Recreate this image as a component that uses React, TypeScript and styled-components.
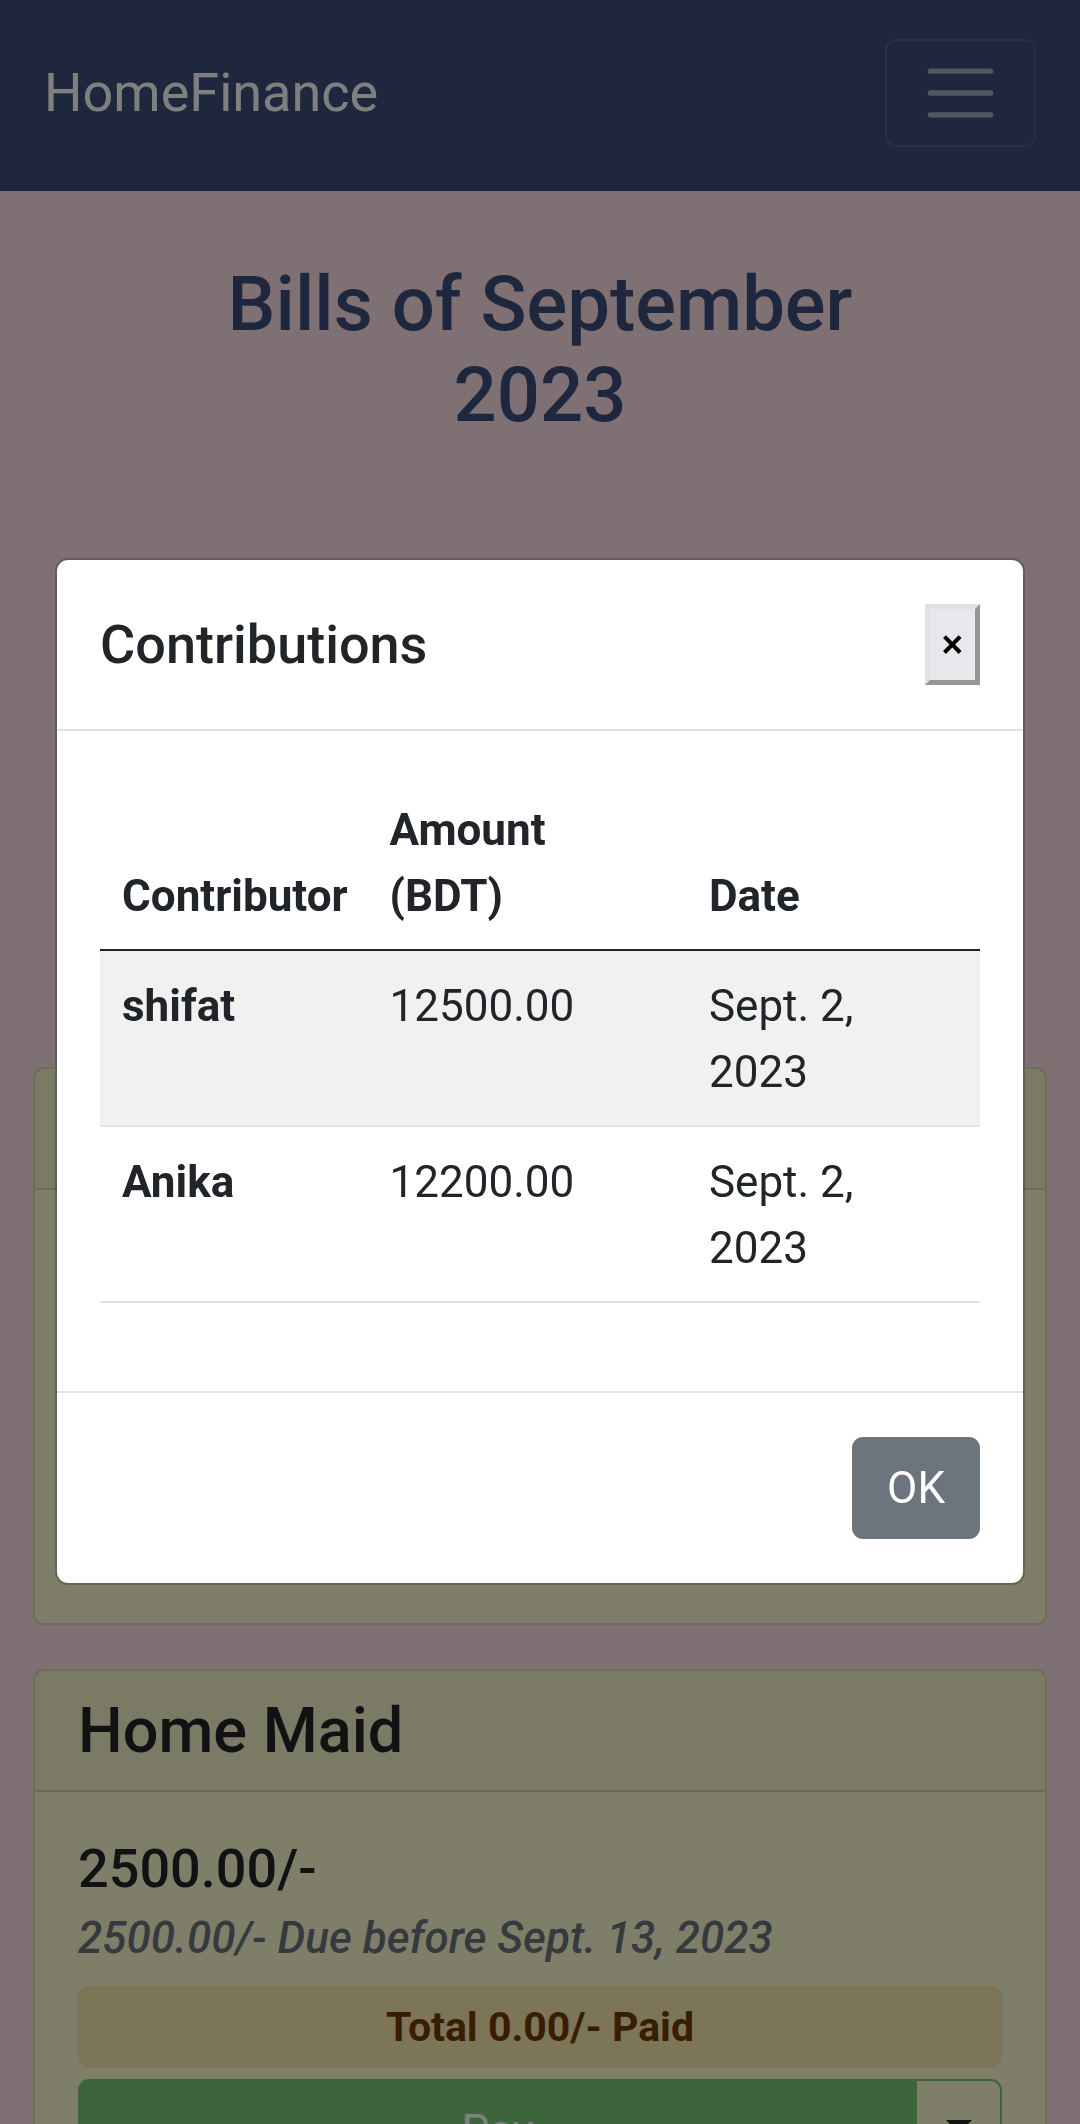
import React, { useState } from "react";
import styled, { createGlobalStyle } from "styled-components";

const GlobalStyle = createGlobalStyle`
  *, *::before, *::after { box-sizing: border-box; }
  body {
    margin: 0;
    overflow: hidden;
    background: #ffe3e7;
    color: #212529;
    font-family: Roboto, "Noto Sans", sans-serif;
    font-size: 44px;
    line-height: 66px;
  }
  button { font-family: inherit; }
`;

const Page = styled.div`
  height: 100vh;
  overflow: hidden;
`;

const Navbar = styled.nav`
  display: flex;
  align-items: center;
  justify-content: space-between;
  padding: 39px 44px 44px;
  background: #3c4f7b;
`;

const Brand = styled.a`
  color: #fff;
  font-size: 54px;
  line-height: 82px;
  text-decoration: none;
`;

const Toggler = styled.button`
  display: flex;
  align-items: center;
  justify-content: center;
  padding: 11px 32px;
  border: 2px solid rgba(255, 255, 255, 0.1);
  border-radius: 11px;
  background: transparent;
`;

const TogglerIcon = styled.svg`
  width: 83px;
  height: 82px;
`;

const PageTitle = styled.h1`
  margin: 68px 0 0;
  padding: 0 165px;
  color: #3c4f7b;
  font-size: 76px;
  font-weight: 500;
  line-height: 91px;
  text-align: center;
`;

const BillList = styled.main`
  display: flex;
  flex-direction: column;
  gap: 44px;
  margin-top: 626px;
  padding: 0 33px;
`;

const Card = styled.article`
  border: 2px solid rgba(0, 0, 0, 0.125);
  border-radius: 11px;
  background: #fffdd2;
`;

const CardHeader = styled.header`
  min-height: 121px;
  padding: 22px 43px;
  border-bottom: 2px solid rgba(0, 0, 0, 0.125);
  background: rgba(0, 0, 0, 0.03);
`;

const CardName = styled.h3`
  margin: 0;
  font-size: 63px;
  font-weight: 500;
  line-height: 75px;
`;

const CardBody = styled.div`
  display: flex;
  flex-direction: column;
  min-height: 433px;
  padding: 44px 43px;
`;

const Amount = styled.h5`
  margin: 0 0 10px;
  font-size: 54px;
  font-weight: 500;
  line-height: 66px;
`;

const DueDate = styled.h6`
  margin: 0 0 22px;
  color: #6c757d;
  font-size: 44px;
  font-style: italic;
  font-weight: 500;
  line-height: 52px;
`;

const PaidBadge = styled.div`
  margin-bottom: 11px;
  border-radius: 11px;
  background: #faeaae;
  color: #733b00;
  font-size: 41px;
  font-weight: 700;
  line-height: 82px;
  text-align: center;
`;

const PayGroup = styled.div`
  display: flex;
`;

const PayButton = styled.button`
  flex: 1;
  padding: 17px 33px;
  border: 2px solid #7cc878;
  border-radius: 11px 0 0 11px;
  background: #7cc878;
  color: #fff;
  font-size: 44px;
  line-height: 66px;
`;

const MoreButton = styled.button`
  display: flex;
  align-items: center;
  justify-content: center;
  width: 85px;
  padding: 0 0 9px;
  border: 2px solid #7cc878;
  border-left: 0;
  border-radius: 0 11px 11px 0;
  background: transparent;

  &::after {
    content: "";
    border-top: 13px solid #212529;
    border-right: 13px solid transparent;
    border-left: 13px solid transparent;
  }
`;

const Backdrop = styled.div`
  position: fixed;
  inset: 0;
  display: flex;
  align-items: center;
  padding: 63px 55px 44px;
  background: rgba(0, 0, 0, 0.5);
`;

const Dialog = styled.section`
  flex: 1;
  border: 2px solid rgba(0, 0, 0, 0.2);
  border-radius: 13px;
  background: #fff;
  background-clip: padding-box;
`;

const DialogHeader = styled.header`
  display: flex;
  align-items: flex-start;
  justify-content: space-between;
  height: 171px;
  padding: 44px 43px;
  border-bottom: 2px solid #dee2e6;
`;

const DialogTitle = styled.h5`
  margin: 0;
  font-size: 54px;
  font-weight: 500;
  line-height: 82px;
`;

const CloseButton = styled.button`
  display: flex;
  align-items: center;
  justify-content: center;
  width: 55px;
  height: 81px;
  padding: 0;
  border: 5px solid;
  border-color: #e2e2e2 #969696 #969696 #e2e2e2;
  background: #e8e8ec;
  color: #000;
  font-size: 41px;
  font-weight: 500;
  line-height: 55px;
`;

const DialogBody = styled.div`
  padding: 44px 43px;
`;

const Table = styled.table`
  width: 100%;
  margin-bottom: 44px;
  border-spacing: 0;
  table-layout: fixed;
  text-align: left;

  th, td {
    padding: 22px 22px 20px;
    border-bottom: 2px solid #dee2e6;
    vertical-align: top;
  }
  thead th {
    border-color: #212529;
    vertical-align: bottom;
  }
  tbody tr:nth-child(odd) > * {
    background: #f1f1f1;
  }
`;

const Column = styled.col<{ $share?: string }>`
  width: ${(p) => p.$share ?? "auto"};
`;

const DialogFooter = styled.footer`
  display: flex;
  justify-content: flex-end;
  padding: 44px 43px;
  border-top: 2px solid #dee2e6;
`;

const OkButton = styled.button`
  padding: 16px 33px;
  border: 2px solid #6c757d;
  border-radius: 11px;
  background: #6c757d;
  color: #fff;
  font-size: 44px;
  line-height: 66px;
`;

const contributions = [
  { name: "shifat", amount: "12500.00", date: "Sept. 2, 2023" },
  { name: "Anika", amount: "12200.00", date: "Sept. 2, 2023" },
];

function ContributionsDialog({ onClose }: { onClose: () => void }) {
  return (
    <Backdrop>
      <Dialog role="dialog" aria-modal="true" aria-labelledby="contributions-title">
        <DialogHeader>
          <DialogTitle id="contributions-title">Contributions</DialogTitle>
          <CloseButton type="button" aria-label="Close" onClick={onClose}>×</CloseButton>
        </DialogHeader>
        <DialogBody>
          <Table>
            <colgroup>
              <Column $share="30.4%" />
              <Column $share="36.3%" />
              <Column />
            </colgroup>
            <thead>
              <tr>
                <th scope="col">Contributor</th>
                <th scope="col">Amount (BDT)</th>
                <th scope="col">Date</th>
              </tr>
            </thead>
            <tbody>
              {contributions.map((c) => (
                <tr key={c.name}>
                  <th scope="row">{c.name}</th>
                  <td>{c.amount}</td>
                  <td>{c.date}</td>
                </tr>
              ))}
            </tbody>
          </Table>
        </DialogBody>
        <DialogFooter>
          <OkButton type="button" onClick={onClose}>OK</OkButton>
        </DialogFooter>
      </Dialog>
    </Backdrop>
  );
}

export default function App() {
  const [open, setOpen] = useState(true);
  return (
    <Page>
      <GlobalStyle />
      <Navbar>
        <Brand href="#">HomeFinance</Brand>
        <Toggler type="button" aria-label="Toggle navigation">
          <TogglerIcon viewBox="0 0 30 30" aria-hidden="true">
            <path
              d="M4 7h22M4 15h22M4 23h22"
              fill="none"
              stroke="rgba(255, 255, 255, 0.55)"
              strokeWidth="2"
              strokeLinecap="round"
              strokeMiterlimit="10"
            />
          </TogglerIcon>
        </Toggler>
      </Navbar>
      <PageTitle>Bills of September 2023</PageTitle>
      <BillList>
        <Card>
          <CardHeader />
          <CardBody />
        </Card>
        <Card>
          <CardHeader>
            <CardName>Home Maid</CardName>
          </CardHeader>
          <CardBody>
            <Amount>2500.00/-</Amount>
            <DueDate>2500.00/- Due before Sept. 13, 2023</DueDate>
            <PaidBadge>Total 0.00/- Paid</PaidBadge>
            <PayGroup>
              <PayButton type="button">Pay</PayButton>
              <MoreButton type="button" aria-label="More payment options" onClick={() => setOpen(true)} />
            </PayGroup>
          </CardBody>
        </Card>
      </BillList>
      {open && <ContributionsDialog onClose={() => setOpen(false)} />}
    </Page>
  );
}
